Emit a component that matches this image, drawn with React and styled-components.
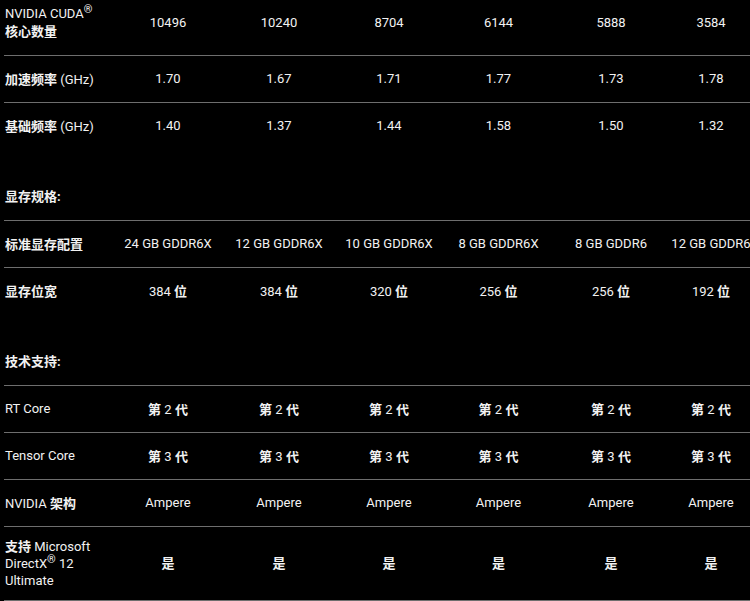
import React from 'react';
import styled, { createGlobalStyle } from 'styled-components';

const GlobalStyle = createGlobalStyle`
  html, body {
    margin: 0;
    background: #000;
    overflow: hidden;
  }
  body {
    font-family: Roboto, "Noto Sans CJK SC", sans-serif;
    font-size: 13px;
    color: #f2f2f2;
  }
`;

const cols = '109px 110px 112px 108px 111px 114px 86px';

const Page = styled.div`
  margin-top: -11px;
  padding-left: 4px;
  width: 760px;
`;

const Section = styled.section`
  display: flex;
  flex-direction: column;
`;

const Heading = styled.h3`
  margin: 0;
  padding: 39px 0 14px 1px;
  font-size: 13px;
  line-height: 18px;
  font-weight: 700;
  color: #f2f2f2;
`;

const Row = styled.div`
  display: grid;
  grid-template-columns: ${cols};
  align-items: center;
  box-sizing: border-box;
  min-height: 47px;
  padding: ${(p) => (p.$pad ? `${p.$pad}px 0` : '10px 0 11px')};
  border-top: 1px solid #6e6e6e;
  border-bottom: ${(p) => (p.$last ? '1px solid #6e6e6e' : 'none')};
  line-height: 17px;
`;

const Label = styled.div`
  padding-left: 1px;
`;

const Value = styled.div`
  text-align: center;
  white-space: nowrap;
`;

const Han = styled.span`
  font-family: "Noto Sans CJK SC", sans-serif;
  font-weight: 700;
`;

const Sup = styled.sup`
  font-size: 11px;
  line-height: 0;
  vertical-align: 5px;
`;

const sections = [
  {
    rows: [
      {
        label: ['NVIDIA CUDA', <Sup key="r">®</Sup>, <br key="b" />, '核心数量'],
        values: ['10496', '10240', '8704', '6144', '5888', '3584'],
        pad: 15,
      },
      { label: '加速频率 (GHz)', values: ['1.70', '1.67', '1.71', '1.77', '1.73', '1.78'] },
      { label: '基础频率 (GHz)', values: ['1.40', '1.37', '1.44', '1.58', '1.50', '1.32'] },
    ],
  },
  {
    title: '显存规格:',
    rows: [
      {
        label: '标准显存配置',
        values: ['24 GB GDDR6X', '12 GB GDDR6X', '10 GB GDDR6X', '8 GB GDDR6X', '8 GB GDDR6', '12 GB GDDR6'],
      },
      { label: '显存位宽', values: ['384 位', '384 位', '320 位', '256 位', '256 位', '192 位'] },
    ],
  },
  {
    title: '技术支持:',
    rows: [
      { label: 'RT Core', values: Array(6).fill('第 2 代') },
      { label: 'Tensor Core', values: Array(6).fill('第 3 代') },
      { label: 'NVIDIA 架构', values: Array(6).fill('Ampere') },
      {
        label: ['支持 Microsoft', <br key="b1" />, 'DirectX', <Sup key="r">®</Sup>, ' 12', <br key="b2" />, 'Ultimate'],
        values: Array(6).fill('是'),
        last: true,
      },
    ],
  },
];

// CJK runs are set in bold, latin stays regular
const Text = ({ children }) => (
  <>
    {React.Children.map(children, (c) =>
      typeof c === 'string'
        ? c.split(/([\u2E80-\u9FFF]+)/).map((part, i) =>
            /[\u2E80-\u9FFF]/.test(part) ? <Han key={i}>{part}</Han> : part
          )
        : c
    )}
  </>
);

const App = () => {
  return (
    <>
      <GlobalStyle />
      <Page>
        {sections.map((section, si) => (
          <Section key={si}>
            {section.title && <Heading>{section.title}</Heading>}
            {section.rows.map((row, ri) => (
              <Row key={ri} $pad={row.pad} $last={row.last}>
                <Label>
                  <Text>{row.label}</Text>
                </Label>
                {row.values.map((v, vi) => (
                  <Value key={vi}>
                    <Text>{v}</Text>
                  </Value>
                ))}
              </Row>
            ))}
          </Section>
        ))}
      </Page>
    </>
  );
};

export default App;
